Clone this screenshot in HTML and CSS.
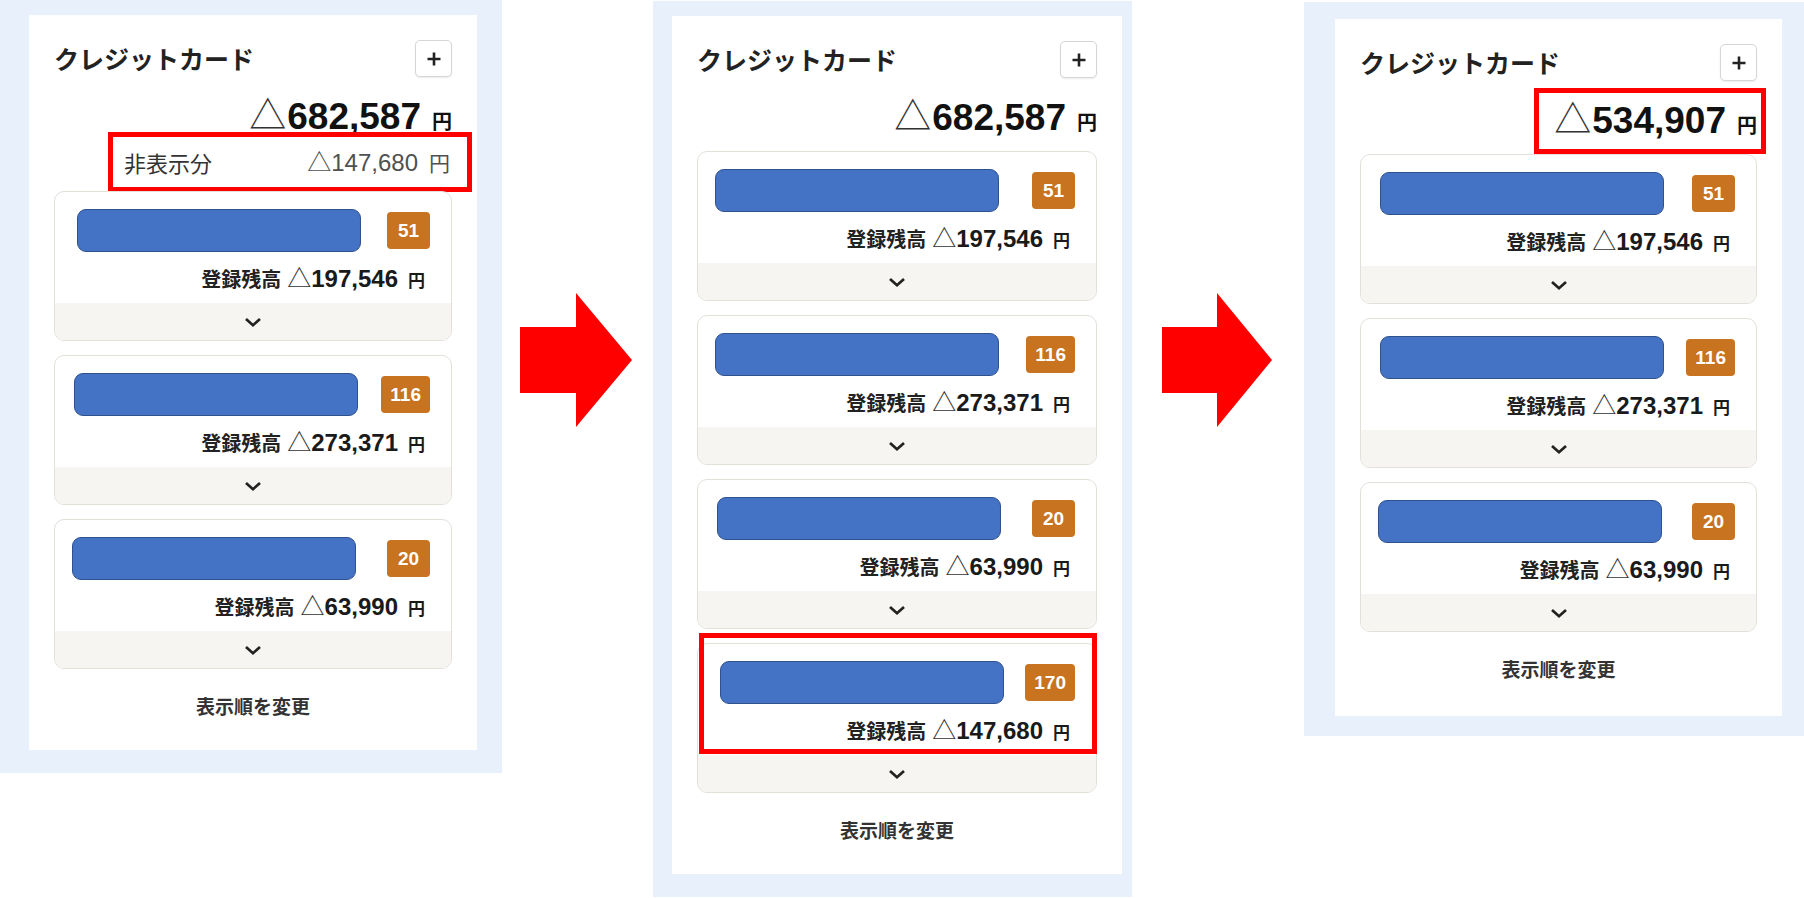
FILE: index.html
```html
<!DOCTYPE html>
<html lang="ja">
<head>
<meta charset="utf-8">
<title>クレジットカード</title>
<link rel="stylesheet" href="styles.css">
</head>
<body>
<div class="stage">

  <section class="panel panel-1">
    <div class="sheet sheet-1">
      <header class="head">
        <h2 class="title">クレジットカード</h2>
        <button class="add" type="button"><svg width="16" height="16" viewBox="0 0 16 16"><path d="M8 1.5v13M1.5 8h13" stroke="#222" stroke-width="2.6" fill="none"/></svg></button>
      </header>
      <div class="total"><span class="amt"><span class="tri">△</span>682,587<span class="yen">円</span></span></div>
      <div class="hidden-row">
        <span class="h-label">非表示分</span>
        <span class="h-amt"><span class="tri">△</span>147,680<span class="yen">円</span></span>
        <span class="mark mark-hidden"></span>
      </div>
      <ul class="cards">
        <li class="card">
          <div class="card-top"><span class="bar bar-r"></span><span class="badge">51</span></div>
          <div class="bal"><span class="bal-text"><span class="bal-label">登録残高</span><span class="tri">△</span><b class="bal-num">197,546</b><span class="yen">円</span></span></div>
          <div class="foot"><svg width="18" height="10" viewBox="0 0 18 10"><polyline points="2,2 9,8.2 16,2" fill="none" stroke="#222" stroke-width="2.7"/></svg></div>
        </li>
        <li class="card">
          <div class="card-top"><span class="bar"></span><span class="badge">116</span></div>
          <div class="bal"><span class="bal-text"><span class="bal-label">登録残高</span><span class="tri">△</span><b class="bal-num">273,371</b><span class="yen">円</span></span></div>
          <div class="foot"><svg width="18" height="10" viewBox="0 0 18 10"><polyline points="2,2 9,8.2 16,2" fill="none" stroke="#222" stroke-width="2.7"/></svg></div>
        </li>
        <li class="card">
          <div class="card-top"><span class="bar bar-l"></span><span class="badge">20</span></div>
          <div class="bal"><span class="bal-text"><span class="bal-label">登録残高</span><span class="tri">△</span><b class="bal-num">63,990</b><span class="yen">円</span></span></div>
          <div class="foot"><svg width="18" height="10" viewBox="0 0 18 10"><polyline points="2,2 9,8.2 16,2" fill="none" stroke="#222" stroke-width="2.7"/></svg></div>
        </li>
      </ul>
      <div class="reorder">表示順を変更</div>
    </div>
  </section>

  <div class="arrow arrow-1"><svg width="112" height="134" viewBox="0 0 112 134"><polygon points="0,34 56,34 56,0 112,67 56,134 56,100 0,100" fill="#ff0000"/></svg></div>

  <section class="panel panel-2">
    <div class="sheet sheet-2">
      <header class="head">
        <h2 class="title">クレジットカード</h2>
        <button class="add" type="button"><svg width="16" height="16" viewBox="0 0 16 16"><path d="M8 1.5v13M1.5 8h13" stroke="#222" stroke-width="2.6" fill="none"/></svg></button>
      </header>
      <div class="total total-gap"><span class="amt"><span class="tri">△</span>682,587<span class="yen">円</span></span></div>
      <ul class="cards">
        <li class="card">
          <div class="card-top"><span class="bar bar-l"></span><span class="badge">51</span></div>
          <div class="bal"><span class="bal-text"><span class="bal-label">登録残高</span><span class="tri">△</span><b class="bal-num">197,546</b><span class="yen">円</span></span></div>
          <div class="foot"><svg width="18" height="10" viewBox="0 0 18 10"><polyline points="2,2 9,8.2 16,2" fill="none" stroke="#222" stroke-width="2.7"/></svg></div>
        </li>
        <li class="card">
          <div class="card-top"><span class="bar bar-l"></span><span class="badge">116</span></div>
          <div class="bal"><span class="bal-text"><span class="bal-label">登録残高</span><span class="tri">△</span><b class="bal-num">273,371</b><span class="yen">円</span></span></div>
          <div class="foot"><svg width="18" height="10" viewBox="0 0 18 10"><polyline points="2,2 9,8.2 16,2" fill="none" stroke="#222" stroke-width="2.7"/></svg></div>
        </li>
        <li class="card">
          <div class="card-top"><span class="bar"></span><span class="badge">20</span></div>
          <div class="bal"><span class="bal-text"><span class="bal-label">登録残高</span><span class="tri">△</span><b class="bal-num">63,990</b><span class="yen">円</span></span></div>
          <div class="foot"><svg width="18" height="10" viewBox="0 0 18 10"><polyline points="2,2 9,8.2 16,2" fill="none" stroke="#222" stroke-width="2.7"/></svg></div>
        </li>
        <li class="card">
          <div class="card-top"><span class="bar bar-r"></span><span class="badge">170</span></div>
          <div class="bal"><span class="bal-text"><span class="bal-label">登録残高</span><span class="tri">△</span><b class="bal-num">147,680</b><span class="yen">円</span></span></div>
          <div class="foot"><svg width="18" height="10" viewBox="0 0 18 10"><polyline points="2,2 9,8.2 16,2" fill="none" stroke="#222" stroke-width="2.7"/></svg></div>
          <span class="mark mark-card"></span>
        </li>
      </ul>
      <div class="reorder">表示順を変更</div>
    </div>
  </section>

  <div class="arrow arrow-2"><svg width="110" height="134" viewBox="0 0 110 134"><polygon points="0,34 55,34 55,0 110,67 55,134 55,100 0,100" fill="#ff0000"/></svg></div>

  <section class="panel panel-3">
    <div class="sheet sheet-3">
      <header class="head">
        <h2 class="title">クレジットカード</h2>
        <button class="add" type="button"><svg width="16" height="16" viewBox="0 0 16 16"><path d="M8 1.5v13M1.5 8h13" stroke="#222" stroke-width="2.6" fill="none"/></svg></button>
      </header>
      <div class="total total-gap"><span class="amt"><span class="tri">△</span>534,907<span class="yen">円</span><span class="mark mark-total"></span></span></div>
      <ul class="cards">
        <li class="card">
          <div class="card-top"><span class="bar"></span><span class="badge">51</span></div>
          <div class="bal"><span class="bal-text"><span class="bal-label">登録残高</span><span class="tri">△</span><b class="bal-num">197,546</b><span class="yen">円</span></span></div>
          <div class="foot"><svg width="18" height="10" viewBox="0 0 18 10"><polyline points="2,2 9,8.2 16,2" fill="none" stroke="#222" stroke-width="2.7"/></svg></div>
        </li>
        <li class="card">
          <div class="card-top"><span class="bar"></span><span class="badge">116</span></div>
          <div class="bal"><span class="bal-text"><span class="bal-label">登録残高</span><span class="tri">△</span><b class="bal-num">273,371</b><span class="yen">円</span></span></div>
          <div class="foot"><svg width="18" height="10" viewBox="0 0 18 10"><polyline points="2,2 9,8.2 16,2" fill="none" stroke="#222" stroke-width="2.7"/></svg></div>
        </li>
        <li class="card">
          <div class="card-top"><span class="bar bar-l"></span><span class="badge">20</span></div>
          <div class="bal"><span class="bal-text"><span class="bal-label">登録残高</span><span class="tri">△</span><b class="bal-num">63,990</b><span class="yen">円</span></span></div>
          <div class="foot"><svg width="18" height="10" viewBox="0 0 18 10"><polyline points="2,2 9,8.2 16,2" fill="none" stroke="#222" stroke-width="2.7"/></svg></div>
        </li>
      </ul>
      <div class="reorder">表示順を変更</div>
    </div>
  </section>

</div>
</body>
</html>
```

FILE: styles.css
```css
* { box-sizing: border-box; }

html, body {
  margin: 0;
  padding: 0;
  background: #ffffff;
}

body {
  font-family: "Liberation Sans", "Noto Sans CJK JP", sans-serif;
  color: #222;
}

.stage {
  display: flex;
  align-items: flex-start;
  width: 1804px;
  height: 898px;
  overflow: hidden;
}

/* light-blue frames */
.panel {
  background: #e8f0fc;
  flex: none;
}
.panel-1 { width: 502px; padding: 15px 0 23px 29px; }
.panel-2 { width: 479px; margin: 1px 0 0 21px; padding: 15px 0 23px 19px; }
.panel-3 { width: 500px; margin: 2px 0 0 32px; padding: 17px 0 20px 31px; }

.arrow { flex: none; margin-top: 293px; line-height: 0; }
.arrow-1 { margin-left: 18px; }
.arrow-2 { margin-left: 30px; }

/* white sheet */
.sheet {
  background: #ffffff;
  padding: 25px 25px 32px 25px;
}
.sheet-1 { width: 448px; }
.sheet-2 { width: 450px; }
.sheet-3 { width: 447px; padding-bottom: 35px; }

.head {
  display: flex;
  justify-content: space-between;
  align-items: center;
  height: 37px;
}
.title {
  margin: 0;
  font-family: "Noto Sans CJK JP", sans-serif;
  font-size: 25px;
  font-weight: 700;
  line-height: 1;
  color: #222;
}
.add {
  width: 37px;
  height: 37px;
  padding: 0;
  border: 1px solid #d6d6d6;
  border-radius: 5px;
  background: #fff;
  box-shadow: 0 1px 2px rgba(0,0,0,0.08);
  display: flex;
  align-items: center;
  justify-content: center;
}

.tri {
  font-family: "Noto Sans CJK JP", sans-serif;
  font-weight: 400;
  line-height: 1;
}
.yen {
  font-family: "Noto Sans CJK JP", sans-serif;
  line-height: 1;
}

/* grand total */
.total {
  margin-top: 18px;
  height: 42px;
  display: flex;
  justify-content: flex-end;
  font-size: 37px;
  font-weight: 700;
  line-height: 42px;
  color: #111;
}
.total-gap { margin-bottom: 13px; }
.amt {
  position: relative;
  display: block;
  height: 42px;
  white-space: nowrap;
}
.total .tri { font-size: 37px; color: #333; margin-right: 1px; }
.total .yen { font-size: 20px; font-weight: 700; margin-left: 11px; }

/* hidden amount row */
.hidden-row {
  position: relative;
  height: 54px;
  padding: 0 2px 4px 70px;
  display: flex;
  justify-content: space-between;
  align-items: center;
  color: #444;
}
.h-label {
  font-family: "Noto Sans CJK JP", sans-serif;
  font-size: 22px;
  line-height: 1;
  color: #333;
}
.h-amt {
  font-size: 24px;
  line-height: 1;
  white-space: nowrap;
  color: #505050;
}
.h-amt .tri { font-size: 24px; }
.h-amt .yen { font-size: 21px; margin-left: 11px; }

/* red annotation boxes */
.mark {
  position: absolute;
  border: 5px solid #ff0000;
  pointer-events: none;
}
.mark-hidden { left: 54px; right: -20px; top: -5px; bottom: -1px; }
.mark-total { left: -20px; right: -9px; top: -11px; bottom: -13px; }
.mark-card { left: 1px; right: -1px; top: -11px; bottom: 38px; }

/* cards */
.cards {
  list-style: none;
  margin: 0;
  padding: 0;
  display: flex;
  flex-direction: column;
  gap: 14px;
}
.card {
  position: relative;
  height: 150px;
  border: 1px solid #e3e0da;
  border-radius: 10px;
  background: #fff;
  display: flex;
  flex-direction: column;
}
.card-top {
  display: flex;
  justify-content: space-between;
  align-items: center;
  height: 60px;
  padding: 17px 21px 0 19px;
}
.bar {
  display: block;
  width: 284px;
  height: 43px;
  background: #4472c4;
  border: 1.5px solid #2f528f;
  border-radius: 9px;
}
.bar-r { margin-left: 3px; }
.bar-l { margin-left: -2px; }
.badge {
  height: 37px;
  min-width: 43px;
  padding: 0 9px;
  border-radius: 4px;
  background: #c8731f;
  color: #fff;
  font-size: 19px;
  font-weight: 700;
  display: flex;
  align-items: center;
  justify-content: center;
}
.bal {
  height: 51px;
  display: flex;
  align-items: center;
  justify-content: flex-end;
  padding-right: 26px;
}
.bal-text {
  white-space: nowrap;
  line-height: 1;
  color: #1a1a1a;
}
.bal-label {
  font-family: "Noto Sans CJK JP", sans-serif;
  font-size: 20px;
  font-weight: 700;
  margin-right: 6px;
  color: #222;
}
.bal .tri { font-size: 24px; color: #333; }
.bal-num { font-size: 24px; font-weight: 700; }
.bal .yen { font-size: 17px; font-weight: 700; margin-left: 10px; }
.foot {
  height: 37px;
  background: #f7f5f1;
  border-radius: 0 0 9px 9px;
  display: flex;
  align-items: center;
  justify-content: center;
}

.reorder {
  margin-top: 25px;
  text-align: center;
  font-family: "Noto Sans CJK JP", sans-serif;
  font-size: 19px;
  font-weight: 700;
  line-height: 24px;
  color: #333;
}
```
